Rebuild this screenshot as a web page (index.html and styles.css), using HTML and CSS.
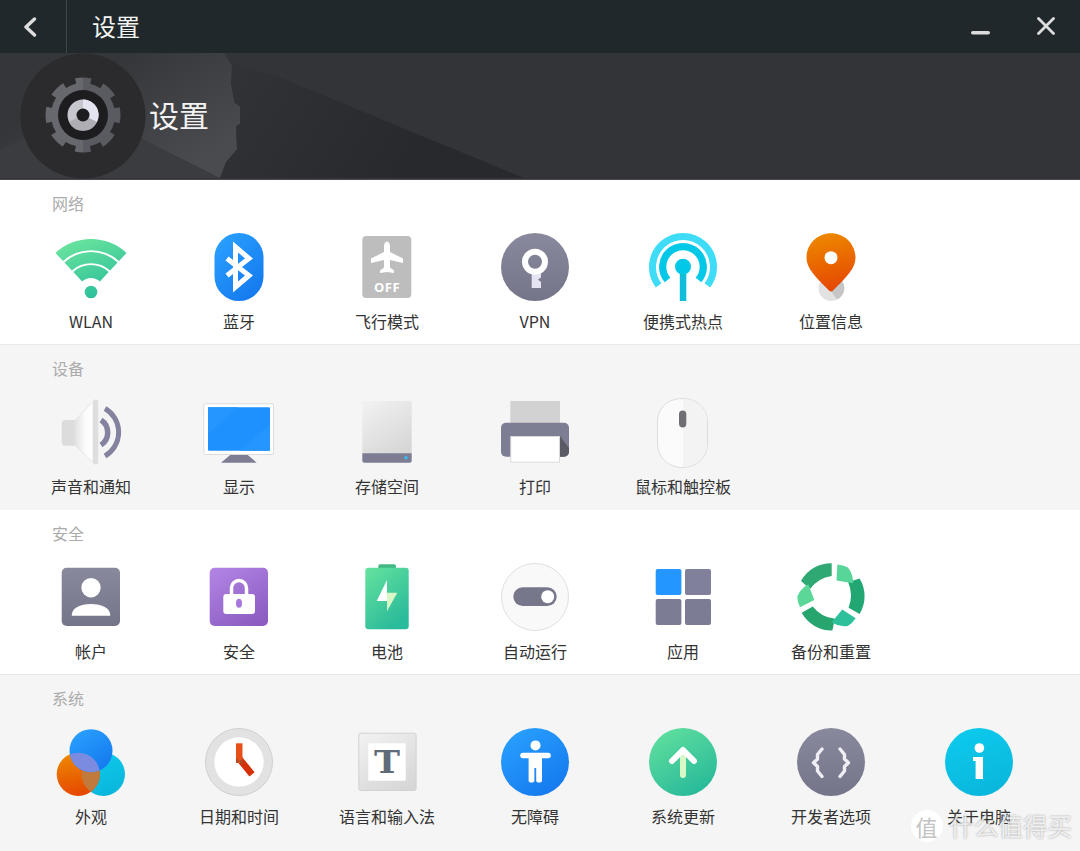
FILE: index.html
```html
<!DOCTYPE html>
<html lang="zh-CN">
<head>
<meta charset="utf-8">
<title>设置</title>
<link rel="stylesheet" href="styles.css">
</head>
<body>
<svg class="defs" width="0" height="0" aria-hidden="true">
  <defs>
    <linearGradient id="gGreen" x1="0" y1="0" x2="0.6" y2="1"><stop offset="0" stop-color="#66e29e"/><stop offset="1" stop-color="#2abb9a"/></linearGradient>
    <linearGradient id="gWifi" gradientUnits="userSpaceOnUse" x1="20" y1="6" x2="42" y2="62"><stop offset="0" stop-color="#68e39d"/><stop offset="1" stop-color="#2fc09b"/></linearGradient>
    <linearGradient id="gBlue" x1="0.1" y1="0" x2="0.8" y2="1"><stop offset="0" stop-color="#2aa2ff"/><stop offset="1" stop-color="#1478ee"/></linearGradient>
    <linearGradient id="gSlate" x1="0" y1="0" x2="0" y2="1"><stop offset="0" stop-color="#89899d"/><stop offset="1" stop-color="#75758a"/></linearGradient>
    <linearGradient id="gOrange" x1="0.2" y1="0" x2="0.4" y2="1"><stop offset="0" stop-color="#ee8a00"/><stop offset="1" stop-color="#e54800"/></linearGradient>
    <linearGradient id="gPurple" x1="0.1" y1="0" x2="0.7" y2="1"><stop offset="0" stop-color="#b184e4"/><stop offset="1" stop-color="#8d5dc2"/></linearGradient>
    <linearGradient id="gCyan" x1="0.2" y1="0" x2="0.6" y2="1"><stop offset="0" stop-color="#0ccbed"/><stop offset="1" stop-color="#0ab6dc"/></linearGradient>
    <linearGradient id="gSilver" x1="0.2" y1="0" x2="0.8" y2="1"><stop offset="0" stop-color="#f0f0f0"/><stop offset="1" stop-color="#d6d6d6"/></linearGradient>
    <linearGradient id="gCone" x1="0" y1="0" x2="1" y2="0"><stop offset="0" stop-color="#e2e2e2"/><stop offset="0.55" stop-color="#fafafa"/><stop offset="1" stop-color="#ffffff"/></linearGradient>
    <linearGradient id="gGear" x1="0" y1="0" x2="1" y2="0"><stop offset="0.5" stop-color="#66686d"/><stop offset="0.5" stop-color="#595b60"/></linearGradient>
    <linearGradient id="gFold" gradientUnits="userSpaceOnUse" x1="110" y1="10" x2="180" y2="120"><stop offset="0" stop-color="#353639"/><stop offset="1" stop-color="#4a4b4e"/></linearGradient>
    <linearGradient id="gShade" gradientUnits="userSpaceOnUse" x1="240" y1="20" x2="400" y2="126"><stop offset="0" stop-color="#313236"/><stop offset="1" stop-color="#28292c"/></linearGradient>
    <clipPath id="cOrange"><circle cx="21.3" cy="46.3" r="21.6"/></clipPath>
  </defs>
</svg>

<div class="window">
  <header class="titlebar">
    <button class="back" aria-label="返回">
      <svg class="tb-icon" viewBox="0 0 14 20"><path d="M11.5 2 3 10l8.500 8" class="tb-stroke"/></svg>
    </button>
    <h1 class="tb-title">设置</h1>
    <div class="tb-actions">
      <svg class="tb-min" viewBox="0 0 19 4"><rect width="19" height="3.600" rx="1.800" fill="#dcdcdc"/></svg>
      <svg class="tb-close" viewBox="0 0 18 18"><path d="M1.500 1.500l15 15M16.500 1.500l-15 15" class="tb-stroke thin"/></svg>
    </div>
  </header>

  <section class="hero">
    <svg class="hero-bg" viewBox="0 0 1080 127" preserveAspectRatio="none" aria-hidden="true">
      <path d="M0 0H224L234.500 17 231 30 234.500 50 240 54V71L236 74 237 97 226 110 220 126H0Z" fill="url(#gFold)"/>
      <path d="M0 97 90 60 220 126H0Z" fill="#3b3c3f"/>
      <path d="M232 10 286 27 524 126H220L226 110 237 97 236 74 240 71V54L234.500 50 231 30Z" fill="url(#gShade)"/>
    </svg>
    <div class="hero-badge">
      <svg class="hero-gear" viewBox="0 0 126 126">
        <circle cx="63" cy="63" r="62.500" fill="#2b2b2e"/>
        <circle cx="63" cy="62" r="32" fill="url(#gGear)"/>
        <circle cx="63" cy="62" r="34" fill="none" stroke="url(#gGear)" stroke-width="7" stroke-dasharray="15 11.700" stroke-dashoffset="7.500"/>
        <circle cx="63" cy="62" r="25" fill="#1d1d20"/>
        <circle cx="63" cy="62" r="15.500" fill="#c6c6ce"/>
        <path d="M63 46.500A15.500 15.500 0 0 1 77 69L63 62Z" fill="#e4e4f0"/>
        <path d="M49 69A15.500 15.500 0 0 0 77 69L63 62Z" fill="#aeaeb4"/>
        <circle cx="63" cy="62" r="6.500" fill="#1d1d20"/>
      </svg>
    </div>
    <h2 class="hero-title">设置</h2>
  </section>

  <section class="group">
    <h3 class="group-title">网络</h3>
    <div class="items">
      <div class="item">
        <svg class="icon" viewBox="0 0 68 68">
          <g fill="url(#gWifi)">
            <path d="M-1.500 20A52 52 0 0 1 69.500 20L62 28A41.500 41.500 0 0 0 6 28Z"/>
            <path d="M7.400 29.500A39 39 0 0 1 60.600 29.500L53.100 37.500A28.500 28.500 0 0 0 14.900 37.500Z"/>
            <path d="M16.300 39A26 26 0 0 1 51.700 39L42.900 48.500A13 13 0 0 0 25.100 48.500Z"/>
            <circle cx="34" cy="59" r="6.300"/>
          </g>
        </svg>
        <span class="name">WLAN</span>
      </div>
      <div class="item">
        <svg class="icon" viewBox="0 0 68 68">
          <rect x="9.500" y="0" width="49" height="68" rx="24.500" fill="url(#gBlue)"/>
          <path d="M22 25.500 44 42.500 30.500 54V14L44 25.500 22 42.500" fill="none" stroke="#fff" stroke-width="5"/>
        </svg>
        <span class="name">蓝牙</span>
      </div>
      <div class="item">
        <svg class="icon" viewBox="0 0 68 68">
          <rect x="9.300" y="3" width="49" height="62" rx="4" fill="#bdbdbd"/>
          <path d="M34 8.500c2 0 3 2.500 3 5V19l13 6.500V30l-13-3v7.500l4 3V40l-7-1-7 1v-2.500l4-3V27l-13 3v-4.500L31 19v-5.500c0-2.500 1-5 3-5Z" fill="#fff"/>
          <text x="34" y="59" class="off">OFF</text>
        </svg>
        <span class="name">飞行模式</span>
      </div>
      <div class="item">
        <svg class="icon" viewBox="0 0 68 68">
          <circle cx="34" cy="34" r="34" fill="url(#gSlate)"/>
          <path d="M30.700 38H40V44.500L37 46.500 40 49V55H30.700Z" fill="#e4e4f2"/>
          <circle cx="34" cy="28.700" r="10" fill="none" stroke="#fff" stroke-width="6"/>
        </svg>
        <span class="name">VPN</span>
      </div>
      <div class="item">
        <svg class="icon" viewBox="0 0 68 68">
          <path d="M9.640 52.350A30.500 30.500 0 1 1 58.360 52.350" fill="none" stroke="#3edcf6" stroke-width="7"/>
          <path d="M18.500 47A20.300 20.300 0 1 1 49.500 47" fill="none" stroke="#02c8e8" stroke-width="7.300"/>
          <rect x="30.800" y="36" width="6.500" height="32" fill="#12bcdb"/>
          <circle cx="34" cy="33.700" r="8" fill="#02c8e8"/>
        </svg>
        <span class="name">便携式热点</span>
      </div>
      <div class="item">
        <svg class="icon" viewBox="0 0 68 68">
          <circle cx="34" cy="55.500" r="12.500" fill="#e2e2e2"/>
          <path d="M34 58 44 46.500A12.500 12.500 0 0 1 40 66.500Z" fill="#c6c6c6"/>
          <path d="M34 0.300C47.500 0.300 58.500 11 58.500 24.800 58.500 35 50 44 36 57.500 35 58.700 33 58.700 32 57.500 18 44 9.500 35 9.500 24.800 9.500 11 20.500 0.300 34 0.300Z" fill="url(#gOrange)"/>
          <circle cx="34" cy="24.700" r="6.500" fill="#fff"/>
        </svg>
        <span class="name">位置信息</span>
      </div>
    </div>
  </section>

  <section class="group alt">
    <h3 class="group-title">设备</h3>
    <div class="items">
      <div class="item">
        <svg class="icon" viewBox="0 0 68 68">
          <rect x="4.700" y="22" width="16" height="25.700" rx="4" fill="#dcdcdc"/>
          <path d="M18 22.500 36 3.500V64.500L18 47.200Z" fill="url(#gCone)" stroke="#e2e2e2" stroke-width=".8"/>
          <rect x="36" y="1.500" width="5.300" height="65" rx="2.650" fill="#dedede"/>
          <path d="M44 22A15 15 0 0 1 44 47" fill="none" stroke="#8383a0" stroke-width="5.500"/>
          <path d="M48 10.500A27.500 27.500 0 0 1 48 58" fill="none" stroke="#8383a0" stroke-width="5"/>
        </svg>
        <span class="name">声音和通知</span>
      </div>
      <div class="item">
        <svg class="icon" viewBox="0 0 68 68">
          <path d="M27 55.500H41L51.700 64.700H16Z" fill="#7c7c92"/>
          <rect x="-1.200" y="5.800" width="69.700" height="50.700" rx="1.500" fill="#fff" stroke="#dcdcdc"/>
          <rect x="3" y="9.300" width="62" height="43.400" rx="1" fill="#1f91ff"/>
          <path d="M3 9.300H33L3 36ZM65 52.700H35L65 26Z" fill="#2596ff"/>
        </svg>
        <span class="name">显示</span>
      </div>
      <div class="item">
        <svg class="icon" viewBox="0 0 68 68">
          <path d="M11.300 3H56.700A2 2 0 0 1 58.700 5V56H9.300V5A2 2 0 0 1 11.300 3Z" fill="url(#gSilver)"/>
          <path d="M9.300 55.300H58.700V62.700A2 2 0 0 1 56.700 64.700H11.300A2 2 0 0 1 9.300 62.700Z" fill="#7c7c92"/>
          <circle cx="53" cy="59.700" r="1.800" fill="#35baf2"/>
        </svg>
        <span class="name">存储空间</span>
      </div>
      <div class="item">
        <svg class="icon" viewBox="0 0 68 68">
          <rect x="9.300" y="3" width="49.700" height="23" fill="#d2d2d2"/>
          <rect x="0" y="24.700" width="68" height="34" rx="5" fill="#7d7d94"/>
          <path d="M59 38 68 50V53.700A5 5 0 0 1 63 58.700H59Z" fill="#5a5b64"/>
          <rect x="9.800" y="38.500" width="48.700" height="25.700" fill="#fff" stroke="#dadada"/>
        </svg>
        <span class="name">打印</span>
      </div>
      <div class="item">
        <svg class="icon" viewBox="0 0 68 68">
          <path d="M33.500 0.500C47 0.500 58.500 9 58.500 24V45C58.500 60 47 69.500 33.500 69.500S8.500 60 8.500 45V24C8.500 9 20 0.500 33.500 0.500Z" fill="#fbfbfb" stroke="#dcdcdc"/>
          <path d="M34 1C47 1 58 9.500 58 24V45C58 59.500 47 69 34 69Z" fill="#f3f3f3"/>
          <rect x="30" y="12.500" width="7.300" height="17" rx="3.650" fill="#6e6e74"/>
        </svg>
        <span class="name">鼠标和触控板</span>
      </div>
    </div>
  </section>

  <section class="group">
    <h3 class="group-title">安全</h3>
    <div class="items">
      <div class="item">
        <svg class="icon" viewBox="0 0 68 68">
          <rect x="4.700" y="4.700" width="58.300" height="58.300" rx="5" fill="url(#gSlate)"/>
          <circle cx="34" cy="24.700" r="9.700" fill="#fff"/>
          <path d="M14.700 52.700C14.700 45 23 41 34 41S53.300 45 53.300 52.700Z" fill="#fff"/>
        </svg>
        <span class="name">帐户</span>
      </div>
      <div class="item">
        <svg class="icon" viewBox="0 0 68 68">
          <rect x="4.700" y="4.700" width="58.300" height="58.300" rx="5" fill="url(#gPurple)"/>
          <path d="M26.500 31V25A7.500 7.500 0 0 1 41.500 25V31" fill="none" stroke="#fff" stroke-width="3.500"/>
          <rect x="18.300" y="31" width="31.700" height="20" rx="3" fill="#fff"/>
          <ellipse cx="34" cy="40.300" rx="3" ry="4.500" fill="#a677dc"/>
        </svg>
        <span class="name">安全</span>
      </div>
      <div class="item">
        <svg class="icon" viewBox="0 0 68 68">
          <path d="M25.300 5V3.300A2 2 0 0 1 27.300 1.300H41A2 2 0 0 1 43 3.300V5Z" fill="#3fb883"/>
          <rect x="12.300" y="4.700" width="43.400" height="61.600" rx="3" fill="url(#gGreen)"/>
          <path d="M34 17 23.700 38H34Z" fill="#fff"/>
          <path d="M34 29.700H44.300L34 48.300Z" fill="#d8f8c8"/>
        </svg>
        <span class="name">电池</span>
      </div>
      <div class="item">
        <svg class="icon" viewBox="0 0 68 68">
          <circle cx="34" cy="34" r="33.500" fill="#f9f9f9" stroke="#e0e0e0"/>
          <rect x="12.300" y="24.300" width="43.400" height="18.700" rx="9.350" fill="#77778c"/>
          <circle cx="46.700" cy="33.700" r="6.500" fill="#fff"/>
        </svg>
        <span class="name">自动运行</span>
      </div>
      <div class="item">
        <svg class="icon" viewBox="0 0 68 68">
          <rect x="6.700" y="6" width="25.700" height="26" rx="2" fill="#2397ff"/>
          <rect x="36" y="6" width="26" height="26" rx="2" fill="#80809a"/>
          <rect x="6.700" y="36" width="25.700" height="26" rx="2" fill="#7c7c94"/>
          <rect x="36" y="36" width="26" height="26" rx="2" fill="#7c7c94"/>
        </svg>
        <span class="name">应用</span>
      </div>
      <div class="item">
        <svg class="icon" viewBox="0 0 68 68">
          <g>
            <path d="M34.700 .3A34 34 0 0 0 4 18L13 26Q21 15 34.700 13Z" fill="#2fa874"/>
            <path d="M11.300 21.300Q3 26 .3 33.700 .3 39 3 44.300L17.300 37Z" fill="#5bd898"/>
          </g>
          <g transform="rotate(120 34 33.700)">
            <path d="M34.700 .3A34 34 0 0 0 4 18L13 26Q21 15 34.700 13Z" fill="#22a672"/>
            <path d="M11.300 21.300Q3 26 .3 33.700 .3 39 3 44.300L17.300 37Z" fill="#58d69a"/>
          </g>
          <g transform="rotate(240 34 33.700)">
            <path d="M34.700 .3A34 34 0 0 0 4 18L13 26Q21 15 34.700 13Z" fill="#26a56f"/>
            <path d="M11.300 21.300Q3 26 .3 33.700 .3 39 3 44.300L17.300 37Z" fill="#2ec09a"/>
          </g>
        </svg>
        <span class="name">备份和重置</span>
      </div>
    </div>
  </section>

  <section class="group alt last">
    <h3 class="group-title">系统</h3>
    <div class="items">
      <div class="item">
        <svg class="icon" viewBox="0 0 68 68">
          <circle cx="46.300" cy="46.200" r="21.700" fill="url(#gCyan)"/>
          <circle cx="21.300" cy="46.300" r="21.600" fill="url(#gOrange)"/>
          <circle cx="46.300" cy="46.200" r="21.700" fill="#c2793c" clip-path="url(#cOrange)"/>
          <circle cx="34" cy="22.700" r="21.500" fill="url(#gBlue)"/>
          <circle cx="34" cy="22.700" r="21.500" fill="#7b8ce0" clip-path="url(#cOrange)"/>
        </svg>
        <span class="name">外观</span>
      </div>
      <div class="item">
        <svg class="icon" viewBox="0 0 68 68">
          <circle cx="34" cy="34" r="33.500" fill="#e2e2e2" stroke="#d0d0d0"/>
          <circle cx="34" cy="34" r="24.700" fill="#fff"/>
          <path d="M34.500 31 47 46.300" fill="none" stroke="#d4300a" stroke-width="6.700"/>
          <rect x="31" y="15.300" width="6.500" height="19.700" fill="#e8501a"/>
          <path d="M31 29.500 37.500 37.500V31L31 35Z" fill="#a84a28"/>
        </svg>
        <span class="name">日期和时间</span>
      </div>
      <div class="item">
        <svg class="icon" viewBox="0 0 68 68">
          <rect x="5.800" y="5.200" width="57.300" height="57.300" rx="2" fill="url(#gSilver)" stroke="#d2d2d2"/>
          <rect x="15.300" y="15.300" width="37.400" height="37.400" fill="#fff"/>
          <text x="21" y="44.700" class="tee" textLength="26" lengthAdjust="spacingAndGlyphs">T</text>
        </svg>
        <span class="name">语言和输入法</span>
      </div>
      <div class="item">
        <svg class="icon" viewBox="0 0 68 68">
          <circle cx="34" cy="34" r="34" fill="url(#gBlue)"/>
          <circle cx="34.500" cy="17.400" r="5" fill="#fff"/>
          <rect x="19.200" y="24.800" width="30.600" height="5.400" rx="2.700" fill="#fff"/>
          <path d="M27.600 28H41V52.800A2.900 1.800 0 0 1 35.200 52.800V40H33.400V52.800A2.900 1.800 0 0 1 27.600 52.800Z" fill="#fff"/>
        </svg>
        <span class="name">无障碍</span>
      </div>
      <div class="item">
        <svg class="icon" viewBox="0 0 68 68">
          <circle cx="34" cy="34" r="34" fill="url(#gGreen)"/>
          <path d="M34 26V47" fill="none" stroke="#d8f8c8" stroke-width="6" stroke-linecap="round"/>
          <path d="M23 33 34 22 45 33" fill="none" stroke="#fff" stroke-width="6" stroke-linecap="round" stroke-linejoin="round"/>
        </svg>
        <span class="name">系统更新</span>
      </div>
      <div class="item">
        <svg class="icon" viewBox="0 0 68 68">
          <circle cx="34" cy="34" r="34" fill="url(#gSlate)"/>
          <path d="M25 21 20.500 26.500V31L16.500 34.700 20.500 38.500V43L25 48.500M43 21 47.500 26.500V31L51.500 34.700 47.500 38.500V43L43 48.500" fill="none" stroke="#eeeef4" stroke-width="3.400" stroke-linecap="round" stroke-linejoin="round"/>
        </svg>
        <span class="name">开发者选项</span>
      </div>
      <div class="item">
        <svg class="icon" viewBox="0 0 68 68">
          <circle cx="34" cy="34" r="34" fill="url(#gCyan)"/>
          <circle cx="34.400" cy="20" r="4.800" fill="#fff"/>
          <path d="M28 29H38V51H30.600V33H28Z" fill="#fff"/>
        </svg>
        <span class="name">关于电脑</span>
      </div>
    </div>
  </section>

  <div class="watermark">
    <span class="wm-badge">值</span>
    <span class="wm-text">什么值得买</span>
  </div>
</div>
</body>
</html>
```

FILE: styles.css
```css
* { box-sizing: border-box; margin: 0; padding: 0; }

html, body {
  width: 1080px;
  height: 851px;
  overflow: hidden;
}

body {
  font-family: "Noto Sans CJK SC", "Noto Sans", sans-serif;
  background: #fff;
  color: #333;
}

.defs { position: absolute; }

.window {
  position: relative;
  width: 1080px;
  height: 851px;
  overflow: hidden;
  display: flex;
  flex-direction: column;
}

/* title bar */
.titlebar {
  flex: none;
  height: 53px;
  background: #20282b;
  display: flex;
  align-items: center;
}

.back {
  flex: none;
  width: 67px;
  height: 53px;
  background: none;
  border: 0;
  border-right: 1px solid #3d4649;
  display: flex;
  align-items: center;
  justify-content: center;
  padding-right: 6px;
}

.tb-icon { width: 14px; height: 20px; }

.tb-stroke {
  fill: none;
  stroke: #dedede;
  stroke-width: 3.4;
  stroke-linecap: round;
  stroke-linejoin: round;
}

.tb-stroke.thin { stroke-width: 2.8; }

.tb-title {
  margin: -2px 0 0 25px;
  font-size: 24px;
  font-weight: 400;
  line-height: 32px;
  color: #f4f4f4;
}

.tb-actions {
  margin-left: auto;
  display: flex;
  align-items: center;
  padding-right: 25px;
}

.tb-min { width: 19px; height: 4px; margin-top: 12px; }
.tb-close { width: 18px; height: 18px; margin-left: 47px; margin-top: -1px; }

/* hero */
.hero {
  flex: none;
  position: relative;
  height: 127px;
  background: #333438;
  border-bottom: 1px solid #48494c;
  display: flex;
  align-items: center;
}

.hero-bg {
  position: absolute;
  left: 0;
  top: 0;
  width: 1080px;
  height: 126px;
}

.hero-badge {
  position: relative;
  flex: none;
  margin-left: 20px;
  width: 126px;
  height: 126px;
}

.hero-gear { display: block; width: 126px; height: 126px; }

.hero-title {
  position: relative;
  margin: -4px 0 0 3px;
  font-size: 30px;
  font-weight: 400;
  line-height: 40px;
  color: #f2f2f2;
}

/* groups */
.group {
  flex: none;
  height: 165px;
  padding-top: 11px;
  background: #fff;
  border-bottom: 1px solid #e9e9e9;
}

.group.alt {
  background: #f5f5f5;
  border-bottom: 0;
}

.group.last { flex: 1; }

.group-title {
  margin-left: 52px;
  font-size: 16px;
  font-weight: 400;
  line-height: 24px;
  color: #ababab;
}

.items {
  margin-top: 18px;
  padding-left: 17px;
  display: grid;
  grid-template-columns: repeat(7, 148px);
}

.item {
  display: flex;
  flex-direction: column;
  align-items: center;
}

.icon {
  display: block;
  width: 68px;
  height: 68px;
  overflow: visible;
}

.name {
  margin-top: 8px;
  font-size: 16px;
  line-height: 24px;
  color: #333;
  white-space: nowrap;
}

.off {
  font-family: "Open Sans", sans-serif;
  font-weight: 700;
  font-size: 13px;
  letter-spacing: .5px;
  text-anchor: middle;
  fill: #fff;
}

.tee {
  font-family: "DejaVu Serif", serif;
  font-weight: 700;
  font-size: 32px;
  fill: #5f6b78;
}

/* watermark over the last row */
.watermark {
  position: absolute;
  right: 8px;
  bottom: 9px;
  display: flex;
  align-items: center;
  gap: 7px;
}

.wm-badge {
  width: 32px;
  height: 32px;
  border-radius: 50%;
  background: rgba(255, 255, 255, .92);
  color: #c4c4c4;
  font-size: 22px;
  line-height: 32px;
  text-align: center;
}

.wm-text {
  font-size: 24.500px;
  line-height: 32px;
  color: rgba(255, 255, 255, .8);
  text-shadow: 0 0 2px rgba(110, 110, 110, .7);
}
```
